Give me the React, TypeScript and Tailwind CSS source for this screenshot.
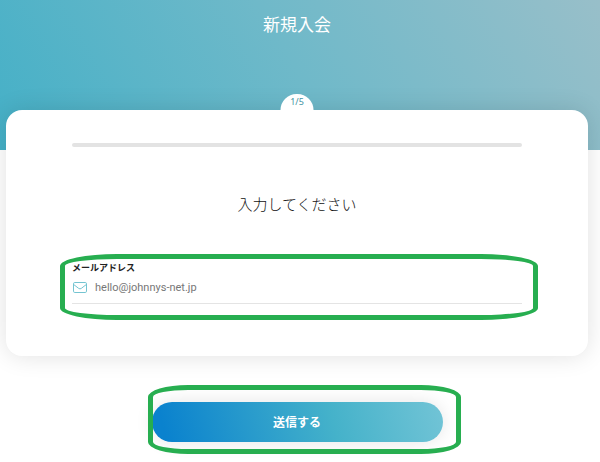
import React, { useState } from 'react';

interface ProgressProps {
  step: number;
  total: number;
}

const StepBadge: React.FC<ProgressProps> = ({ step, total }) => (
  <div className="absolute -top-4 left-1/2 -translate-x-1/2 w-[33px] h-4 rounded-t-full bg-white text-center font-['Noto_Sans',sans-serif] text-[9px] leading-4 text-[#3f93a3]">
    {step}/{total}
  </div>
);

const MailIcon = () => (
  <svg
    className="w-[14px] h-[11px] shrink-0"
    viewBox="0 0 14 11"
    fill="none"
    stroke="#74c4d1"
    strokeLinejoin="round"
    aria-hidden="true"
  >
    <rect x="0.5" y="0.5" width="13" height="10" rx="1.3" />
    <path d="M0.8 2.6 L5.7 6.4 Q7 7.4 8.3 6.4 L13.2 2.6" />
  </svg>
);

export default function App() {
  const [email, setEmail] = useState('');

  return (
    <div className="bg-white font-['Noto_Sans_CJK_JP',sans-serif]">
      <header className="h-[150px] pt-3 pr-1.5 bg-[linear-gradient(60deg,#45b0c7_0%,#6fb9c9_50%,#98bfc9_100%)]">
        <h1 className="text-center text-[17px] leading-6 font-normal text-white">新規入会</h1>
      </header>

      <form onSubmit={(e) => e.preventDefault()}>
        <main className="relative -mt-10 ml-1.5 mr-3 px-[66px] pt-[33px] pb-9 rounded-2xl bg-white shadow-[0_0_24px_rgba(0,0,0,0.12)]">
          <StepBadge step={1} total={5} />
          <div className="h-1 rounded-full bg-[#e3e3e3]" />

          <h2 className="mt-[45px] text-center text-[15px] leading-6 font-light text-[#111]">
            入力してください
          </h2>

          <div className="relative mt-[38px] -mx-3 px-3 pt-1.5 pb-4">
            <label htmlFor="email" className="block text-[9px] leading-4 font-bold text-[#222]">
              メールアドレス
            </label>
            <div className="flex items-center gap-2 h-7 pl-px pb-1 border-b border-[#e4e4e4]">
              <MailIcon />
              <input
                id="email"
                type="email"
                value={email}
                onChange={(e) => setEmail(e.target.value)}
                placeholder="hello@johnnys-net.jp"
                className="flex-1 min-w-0 bg-transparent outline-none font-[Roboto,sans-serif] text-[11px] leading-4 text-[#555] placeholder:text-[#777]"
              />
            </div>
            <div className="absolute inset-y-0 left-0 -right-1 border-5 border-[#27ae50] rounded-[57px/12px] pointer-events-none" />
          </div>
        </main>

        <div className="flex justify-center mt-[29px] pl-2 pb-2">
          <div className="relative pl-1 pr-[18px] pt-[17px] pb-3">
            <button
              type="submit"
              className="block w-[291px] h-10 rounded-full bg-[linear-gradient(75deg,#0a82ce_5%,#45b2ca_62%,#72c4d6_100%)] shadow-[0_0_18px_rgba(0,0,0,0.1)] text-[12px] leading-4 font-bold text-white"
            >
              送信する
            </button>
            <div className="absolute inset-0 border-5 border-[#27ae50] rounded-[40px/12px] pointer-events-none" />
          </div>
        </div>
      </form>
    </div>
  );
}
